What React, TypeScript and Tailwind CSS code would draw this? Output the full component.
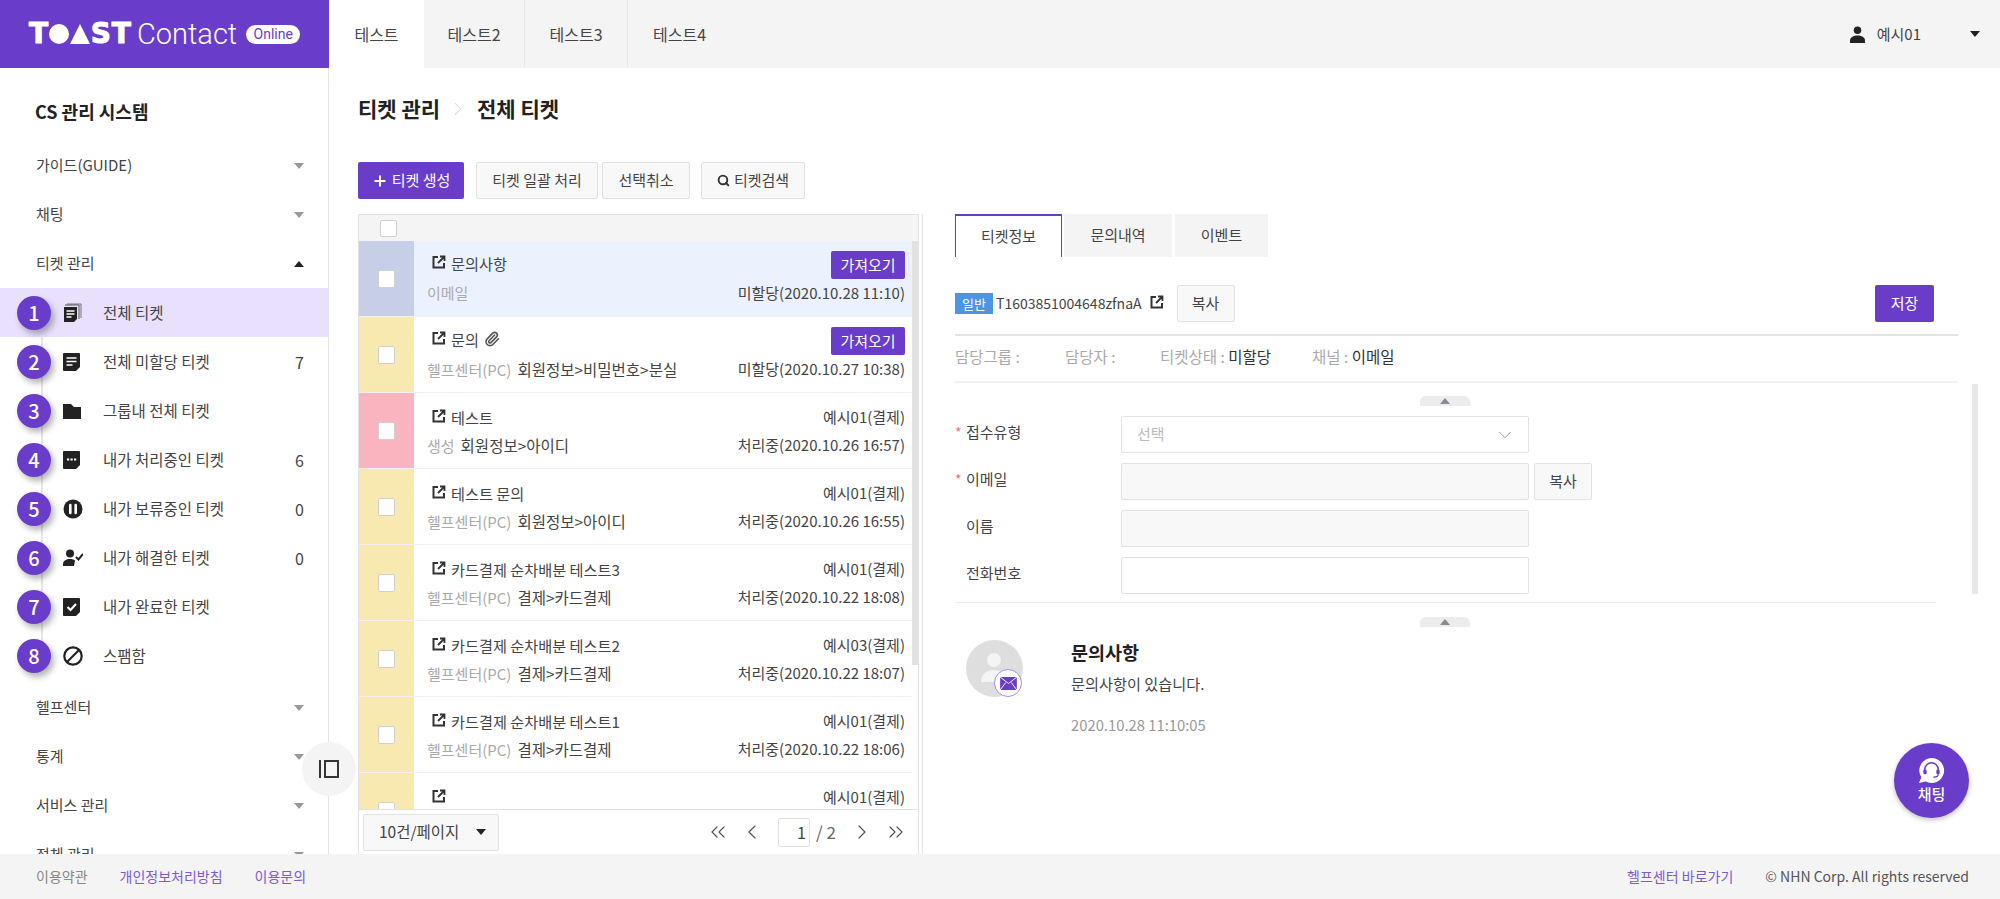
import { ChevronDown, ChevronLeft, ChevronRight, ChevronsLeft, ChevronsRight, Paperclip, Plus, Search } from 'lucide-react';

const sideTop = ['가이드(GUIDE)', '채팅'];
const sideBottom = ['헬프센터', '통계', '서비스 관리', '전체 관리'];

const subMenu = [
  { label: '전체 티켓', count: '', icon: 'docs', active: true },
  { label: '전체 미할당 티켓', count: '7', icon: 'doc' },
  { label: '그룹내 전체 티켓', count: '', icon: 'folder' },
  { label: '내가 처리중인 티켓', count: '6', icon: 'dots' },
  { label: '내가 보류중인 티켓', count: '0', icon: 'pause' },
  { label: '내가 해결한 티켓', count: '0', icon: 'user' },
  { label: '내가 완료한 티켓', count: '', icon: 'check' },
  { label: '스팸함', count: '', icon: 'ban' },
];

const tickets = [
  { color: 'bg-[#c7cfe8]', title: '문의사항', source: '이메일', path: '', owner: '', status: '미할당(2020.10.28 11:10)', take: true, selected: true },
  { color: 'bg-[#f8e9b0]', title: '문의', clip: true, source: '헬프센터(PC)', path: '회원정보>비밀번호>분실', owner: '', status: '미할당(2020.10.27 10:38)', take: true },
  { color: 'bg-[#f9b4c0]', title: '테스트', source: '생성', path: '회원정보>아이디', owner: '예시01(결제)', status: '처리중(2020.10.26 16:57)' },
  { color: 'bg-[#f8e9b0]', title: '테스트 문의', source: '헬프센터(PC)', path: '회원정보>아이디', owner: '예시01(결제)', status: '처리중(2020.10.26 16:55)' },
  { color: 'bg-[#f8e9b0]', title: '카드결제 순차배분 테스트3', source: '헬프센터(PC)', path: '결제>카드결제', owner: '예시01(결제)', status: '처리중(2020.10.22 18:08)' },
  { color: 'bg-[#f8e9b0]', title: '카드결제 순차배분 테스트2', source: '헬프센터(PC)', path: '결제>카드결제', owner: '예시03(결제)', status: '처리중(2020.10.22 18:07)' },
  { color: 'bg-[#f8e9b0]', title: '카드결제 순차배분 테스트1', source: '헬프센터(PC)', path: '결제>카드결제', owner: '예시01(결제)', status: '처리중(2020.10.22 18:06)' },
  { color: 'bg-[#f8e9b0]', title: '', source: '', path: '', owner: '예시01(결제)', status: '' },
];

const Caret = ({ up = false, className = '' }: { up?: boolean; className?: string }) => (
  <svg viewBox="0 0 12 8" className={`w-[12px] h-[8px] ${className}`}>
    <path d={up ? 'M6 1l5 6H1z' : 'M1 1h10L6 7z'} fill="currentColor" />
  </svg>
);

const ExternalIcon = ({ className = '' }: { className?: string }) => (
  <svg viewBox="0 0 14 14" className={`w-[14px] h-[14px] text-[#333] ${className}`} fill="none" stroke="currentColor">
    <path d="M6 2H1.5v10.5H12V8" strokeWidth="2" />
    <path d="M6 8l6-6M8 1.5h4.5V6" strokeWidth="1.8" />
  </svg>
);

const MenuIcon = ({ name }: { name: string }) => {
  const cut = 'M0 2a1 1 0 0 1 1-1h15a1 1 0 0 1 1 1v13l-4 4H1a1 1 0 0 1-1-1z';
  return (
    <svg viewBox="0 0 20 20" className="w-[20px] h-[20px] text-[#222]">
      {name === 'docs' && (
        <g>
          <path d="M4 1h14v14" fill="none" stroke="#777" strokeWidth="1" />
          <path d="M2 3h14v14" fill="none" stroke="#555" strokeWidth="1" transform="translate(0 -1)" />
          <path d="M1 4h13v12l-3 3H1z" fill="currentColor" />
          <path d="M3.5 8h8M3.5 11h8M3.5 14h5" stroke="#fff" strokeWidth="1.4" />
        </g>
      )}
      {name === 'doc' && (
        <g>
          <path d={cut} fill="currentColor" />
          <path d="M3.5 6h10M3.5 9.5h10M3.5 13h6" stroke="#fff" strokeWidth="1.5" />
        </g>
      )}
      {name === 'folder' && <path d="M0 3h8l3 3h7v12H0z" fill="currentColor" />}
      {name === 'dots' && (
        <g>
          <path d={cut} fill="currentColor" />
          <path d="M4 9.5h2.2M7.5 9.5h2.2M11 9.5h2.2" stroke="#fff" strokeWidth="2" />
        </g>
      )}
      {name === 'pause' && (
        <g>
          <circle cx="10" cy="10" r="9.5" fill="currentColor" />
          <path d="M7.3 6v8M12.7 6v8" stroke="#fff" strokeWidth="2.6" strokeLinecap="round" />
        </g>
      )}
      {name === 'user' && (
        <g>
          <circle cx="7" cy="5.5" r="4" fill="currentColor" />
          <path d="M0 18v-2c0-3 3-5 7-5 2 0 4 .5 5 1.5l-1 5.5z" fill="currentColor" />
          <path d="M13 9l2.5 2.5L20 6" fill="none" stroke="currentColor" strokeWidth="2" />
        </g>
      )}
      {name === 'check' && (
        <g>
          <path d={cut} fill="currentColor" />
          <path d="M4.5 10l3 3 5.5-6" fill="none" stroke="#fff" strokeWidth="2.2" />
        </g>
      )}
      {name === 'ban' && (
        <g fill="none" stroke="currentColor" strokeWidth="2.2">
          <circle cx="10" cy="10" r="8.7" />
          <path d="M4 16L16 4" />
        </g>
      )}
    </svg>
  );
};

const Collapser = () => (
  <div className="ml-[465px] w-[50px] h-[10px] rounded-t-[6px] bg-[#ececec] flex items-center justify-center">
    <Caret up className="w-[8px] h-[6px] text-[#8a8a96]" />
  </div>
);

const GrayButton = ({ children, className = '' }: { children: React.ReactNode; className?: string }) => (
  <button className={`h-[37px] rounded-[2px] border border-[#e2e2e2] bg-[#f8f8f8] text-[15px] text-[#444] ${className}`}>{children}</button>
);

const FormRow = ({ label, star = false, children }: { label: string; star?: boolean; children: React.ReactNode }) => (
  <div className="flex items-center h-[37px]">
    <div className="w-[166px] flex items-center text-[15px] text-[#444] -mt-[5px]">
      <span className="w-[11px] text-[#f26d7d] text-[14px]">{star ? '*' : ''}</span>
      {label}
    </div>
    {children}
  </div>
);

export default function App() {
  return (
    <div className="w-[2000px] h-[899px] flex flex-col overflow-hidden bg-white text-[#444] [font-family:'Noto_Sans_CJK_KR','Noto_Sans',sans-serif]">
      {/* Header */}
      <header className="h-[68px] flex shrink-0 bg-[#f4f4f4]">
        <div className="w-[329px] bg-[#693dc9] flex items-center pl-[29px] text-white">
          <div className="flex items-center w-[102px] h-[20px] justify-between [font-family:'DejaVu_Sans',sans-serif] font-bold text-[28px] leading-[20px] [-webkit-text-stroke:1px_white]">
            <span>T</span>
            <span className="w-[20px] h-[20px] rounded-full bg-white" />
            <svg viewBox="0 0 20 20" className="w-[20px] h-[20px]"><path d="M10 0l10 20H0z" fill="#fff" /></svg>
            <span>S</span>
            <span>T</span>
          </div>
          <span className="ml-[6px] [font-family:'Roboto',sans-serif] font-light text-[29px] leading-none">Contact</span>
          <span className="ml-[9px] w-[54px] h-[19px] rounded-full bg-white text-[#693dc9] text-[14px] leading-[19px] text-center [font-family:'Roboto',sans-serif]">Online</span>
        </div>
        <nav className="flex text-[16px] text-[#444]">
          <div className="w-[95px] bg-white flex items-center justify-center">테스트</div>
          <div className="w-[101px] flex items-center justify-center border-r border-[#e6e6e6]">테스트2</div>
          <div className="w-[103px] flex items-center justify-center border-r border-[#e6e6e6]">테스트3</div>
          <div className="w-[103px] flex items-center justify-center">테스트4</div>
        </nav>
        <div className="ml-auto flex items-center pr-[19px] text-[15px]">
          <svg viewBox="0 0 16 18" className="w-[15px] h-[17px] text-[#222]">
            <circle cx="8" cy="4.5" r="4" fill="currentColor" />
            <path d="M0 18v-3c0-3 4-5 8-5s8 2 8 5v3z" fill="currentColor" />
          </svg>
          <span className="ml-[12px]">예시01</span>
          <Caret className="ml-[48px] text-[#222]" />
        </div>
      </header>

      <div className="flex-1 flex min-h-0">
        {/* Sidebar */}
        <aside className="relative w-[329px] shrink-0 border-r border-[#e4e4e4]">
          <div className="h-full overflow-hidden">
            <h2 className="pl-[35px] pt-[29px] h-[73px] text-[18px] font-bold text-[#222] leading-[28px]">CS 관리 시스템</h2>
            {sideTop.map((label) => (
              <div key={label} className="h-[49px] pl-[36px] pr-[23px] flex items-center justify-between text-[15px]">
                {label}
                <Caret className="text-[#999]" />
              </div>
            ))}
            <div className="h-[49px] pl-[36px] pr-[23px] flex items-center justify-between text-[15px]">
              티켓 관리
              <Caret up className="text-[#222]" />
            </div>
            <div className="relative">
              <div className="absolute left-[41px] top-[49px] bottom-[20px] w-[2px] bg-[#e6e6e6]" />
              {subMenu.map((item, i) => (
                <div key={item.label} className={`relative h-[49px] flex items-center text-[15.5px] ${item.active ? 'bg-[#e9e0fd]' : ''}`}>
                  <span className="absolute left-[17px] w-[34px] h-[34px] rounded-full bg-[#693dc9] text-white text-[20px] font-medium flex items-center justify-center shadow-[3px_4px_6px_rgba(0,0,0,0.3)]">
                    {i + 1}
                  </span>
                  <span className="ml-[63px]"><MenuIcon name={item.icon} /></span>
                  <span className="ml-[20px]">{item.label}</span>
                  <span className="absolute left-[295px] text-[16px]">{item.count}</span>
                </div>
              ))}
            </div>
            <div className="mt-[3px]">
              {sideBottom.map((label) => (
                <div key={label} className="h-[49px] pl-[36px] pr-[23px] flex items-center justify-between text-[15px]">
                  {label}
                  <Caret className="text-[#999]" />
                </div>
              ))}
            </div>
          </div>
          <button className="absolute left-[302px] top-[674px] w-[54px] h-[54px] rounded-full bg-[#f4f4f4] flex items-center justify-center">
            <svg viewBox="0 0 20 18" className="w-[20px] h-[18px]" fill="none" stroke="#333" strokeWidth="2">
              <path d="M1 0v18" />
              <rect x="6" y="1" width="13" height="16" />
            </svg>
          </button>
        </aside>

        {/* Main */}
        <main className="flex-1 min-w-0 flex flex-col pl-[29px]">
          <div className="pt-[27px] h-[55px] flex items-center text-[21px] font-bold text-[#222]">
            <span>티켓 관리</span>
            <ChevronRight strokeWidth={1} className="w-[22px] h-[22px] ml-[7px] text-[#c8c8c8]" />
            <span className="ml-[8px]">전체 티켓</span>
          </div>
          <div className="mt-[39px] flex items-center text-[15px]">
            <button className="w-[106px] h-[37px] rounded-[2px] bg-[#693dc9] text-white flex items-center justify-center gap-[4px]">
              <Plus strokeWidth={3} className="w-[16px] h-[16px]" />
              티켓 생성
            </button>
            <GrayButton className="ml-[12px] w-[122px]">티켓 일괄 처리</GrayButton>
            <GrayButton className="ml-[4px] w-[88px]">선택취소</GrayButton>
            <GrayButton className="ml-[11px] w-[104px] flex items-center justify-center gap-[4px]">
              <Search strokeWidth={3.5} className="w-[13px] h-[13px] text-[#333]" />
              티켓검색
            </GrayButton>
          </div>

          <div className="mt-[15px] flex-1 min-h-0 flex">
            {/* Ticket list */}
            <section className="w-[561px] shrink-0 flex flex-col border-x border-t border-[#e2e2e2]">
              <div className="h-[26px] shrink-0 bg-[#f4f4f4] pl-[21px] pt-[5px]">
                <div className="w-[17px] h-[17px] bg-white border border-[#cfcfcf] rounded-[2px]" />
              </div>
              <div className="relative flex-1 min-h-0 overflow-hidden">
                <div className="absolute right-0 top-0 w-[6px] h-[424px] bg-[#e2e2e2] z-10" />
                {tickets.map((t, i) => (
                  <div key={i} className={`h-[76px] flex border-b border-[#f2f2f2] mr-[6px] ${t.selected ? 'bg-[#ebf2fe]' : ''}`}>
                    <div className={`w-[55px] shrink-0 flex items-center justify-center pr-[1px] ${t.color}`}>
                      <div className="w-[17px] h-[18px] bg-white border border-[#d0d0d0] rounded-[2px]" />
                    </div>
                    <div className="flex-1 min-w-0 pl-[13px] pr-[7px] pt-[14px] text-[15px] leading-[20px]">
                      <div className="h-[20px] flex items-center justify-between">
                        <div className={`pl-[5px] flex items-center gap-[5px] ${t.take ? '-mt-[4px]' : ''}`}>
                          <ExternalIcon className="-mt-[2px]" />
                          <span className="text-[15.2px]">{t.title}</span>
                          {t.clip && <Paperclip strokeWidth={2.4} className="w-[16px] h-[16px] text-[#555]" />}
                        </div>
                        {t.take ? (
                          <button className="w-[74px] h-[28px] rounded-[2px] bg-[#693dc9] text-white text-[15px]">가져오기</button>
                        ) : (
                          <span>{t.owner}</span>
                        )}
                      </div>
                      <div className="mt-[8px] h-[20px] flex justify-between">
                        <div>
                          <span className="text-[#aaa]">{t.source}</span>
                          {t.path && <span className="ml-[6px] text-[15.5px]">{t.path}</span>}
                        </div>
                        <span>{t.status}</span>
                      </div>
                    </div>
                  </div>
                ))}
              </div>
              <div className="h-[45px] shrink-0 border-t border-[#e2e2e2] bg-white flex items-center pl-[4px] pr-[10px] text-[15.5px]">
                <div className="w-[136px] h-[37px] rounded-[2px] border border-[#e2e2e2] bg-[#f8f8f8] flex items-center pl-[15px]">
                  10건/페이지
                  <Caret className="ml-[16px] w-[9px] h-[6px] text-[#222]" />
                </div>
                <ChevronsLeft strokeWidth={1.2} className="ml-auto w-[24px] h-[24px] text-[#555]" />
                <ChevronLeft strokeWidth={1.2} className="ml-[10px] w-[24px] h-[24px] text-[#555]" />
                <div className="ml-[14px] w-[32px] h-[29px] rounded-[2px] border border-[#e2e2e2] text-right pr-[3px] text-[16px] leading-[27px]">1</div>
                <span className="ml-[6px] w-[25px] text-[#666] text-[17px]">/ 2</span>
                <ChevronRight strokeWidth={1.2} className="ml-[9px] w-[24px] h-[24px] text-[#555]" />
                <ChevronsRight strokeWidth={1.2} className="ml-[10px] w-[24px] h-[24px] text-[#555]" />
              </div>
            </section>

            {/* Ticket detail */}
            <section className="relative ml-[3px] flex-1 min-w-0 border-l border-[#e2e2e2] pl-[32px]">
              <div className="absolute right-[22px] top-[170px] w-[6px] h-[210px] bg-[#e8e8e8]" />
              <div className="flex items-end h-[43px] text-[15px]">
                <div className="w-[107px] h-[43px] border-x border-t-2 border-[#693dc9] bg-white flex items-center justify-center">티켓정보</div>
                <div className="ml-[2px] w-[108px] h-[43px] bg-[#f4f4f4] flex items-center justify-center">문의내역</div>
                <div className="ml-[3px] w-[93px] h-[43px] bg-[#f4f4f4] flex items-center justify-center">이벤트</div>
              </div>
              <div className="mt-[28px] w-[979px] h-[37px] flex items-center text-[14px]">
                <span className="w-[38px] h-[21px] bg-[#4a96e6] text-white text-[13px] leading-[21px] text-center">일반</span>
                <span className="ml-[3px]">T1603851004648zfnaA</span>
                <ExternalIcon className="ml-[8px] -mt-[3px]" />
                <GrayButton className="ml-[13px] w-[58px]">복사</GrayButton>
                <button className="ml-auto w-[59px] h-[37px] rounded-[2px] bg-[#693dc9] text-white text-[15px]">저장</button>
              </div>
              <div className="mt-[12px] w-[1003px] border-y-2 border-t-[#e4e4e4] border-b-[#f0f0f0] h-[49px] pb-[3px] flex items-center text-[15.5px] text-[#aaa]">
                <span className="w-[110px]">담당그룹 :</span>
                <span className="w-[95px]">담당자 :</span>
                <span className="w-[152px]">티켓상태 : <span className="text-[#333]">미할당</span></span>
                <span>채널 : <span className="text-[#333]">이메일</span></span>
              </div>
              <div className="mt-[13px]"><Collapser /></div>
              <div className="mt-[10px] flex flex-col gap-[10px] w-[640px]">
                <FormRow label="접수유형" star>
                  <div className="w-[408px] h-[37px] rounded-[2px] border border-[#e2e2e2] bg-white flex items-center justify-between pl-[15px] pr-[12px] text-[15px] text-[#bbb]">
                    선택
                    <ChevronDown strokeWidth={1} className="w-[22px] h-[22px] text-[#999]" />
                  </div>
                </FormRow>
                <FormRow label="이메일" star>
                  <div className="w-[408px] h-[37px] rounded-[2px] border border-[#e2e2e2] bg-[#f8f8f8]" />
                  <GrayButton className="ml-[5px] w-[58px]">복사</GrayButton>
                </FormRow>
                <FormRow label="이름">
                  <div className="w-[408px] h-[37px] rounded-[2px] border border-[#e2e2e2] bg-[#f8f8f8]" />
                </FormRow>
                <FormRow label="전화번호">
                  <div className="w-[408px] h-[37px] rounded-[2px] border border-[#e2e2e2] bg-white" />
                </FormRow>
              </div>
              <div className="mt-[8px] w-[981px] border-t border-[#ececec]" />
              <div className="mt-[14px]"><Collapser /></div>
              <div className="mt-[13px] flex pl-[11px]">
                <div className="relative w-[57px] h-[57px] rounded-full bg-[#dedede]">
                  <svg viewBox="0 0 57 57" className="w-[57px] h-[57px]">
                    <circle cx="28" cy="20" r="7" fill="#f4f4f4" />
                    <path d="M15 42c0-8 6-12 13-12s13 4 13 12z" fill="#f4f4f4" />
                  </svg>
                  <span className="absolute left-[28px] top-[29px] w-[28px] h-[28px] rounded-full bg-white border border-[#a88de6] flex items-center justify-center">
                    <svg viewBox="0 0 18 14" className="w-[17px] h-[13px]">
                      <rect width="18" height="14" rx="1" fill="#693dc9" />
                      <path d="M0 0l9 7 9-7M0 14l6-8M18 14l-6-8" fill="none" stroke="#fff" strokeWidth="1" />
                    </svg>
                  </span>
                </div>
                <div className="ml-[48px] -mt-[1px]">
                  <div className="text-[18.5px] font-bold text-[#222] leading-[26px]">문의사항</div>
                  <div className="mt-[5px] text-[15.2px] leading-[26px]">문의사항이 있습니다.</div>
                  <div className="mt-[16px] text-[14.8px] text-[#999] leading-[26px]">2020.10.28 11:10:05</div>
                </div>
              </div>
              <button className="absolute left-[971px] top-[529px] w-[75px] h-[75px] rounded-full bg-[#693dc9] text-white text-[15px] font-medium flex flex-col items-center justify-center shadow-[0_2px_5px_rgba(0,0,0,0.25)]">
                <svg viewBox="0 0 28 28" className="w-[27px] h-[27px]">
                  <path d="M14 1a13 13 0 1 1-6 24.5L1 27l2.5-6A13 13 0 0 1 14 1z" fill="#fff" />
                  <path d="M7 15v-2a7 7 0 0 1 14 0v2" fill="none" stroke="#693dc9" strokeWidth="1.6" />
                  <rect x="5.5" y="13" width="3.5" height="5" rx="1.5" fill="#693dc9" />
                  <rect x="19" y="13" width="3.5" height="5" rx="1.5" fill="#693dc9" />
                  <path d="M21 18c0 2-2 3-5 3" fill="none" stroke="#693dc9" strokeWidth="1.3" />
                </svg>
                <span className="leading-[20px]">채팅</span>
              </button>
            </section>
          </div>
        </main>
      </div>

      {/* Footer */}
      <footer className="h-[45px] shrink-0 bg-[#f4f4f4] flex items-center pl-[36px] pr-[31px] text-[14px] z-10">
        <span className="text-[#888]">이용약관</span>
        <span className="ml-[32px] text-[#7a5bd6]">개인정보처리방침</span>
        <span className="ml-[32px] text-[#7a5bd6]">이용문의</span>
        <span className="ml-auto text-[#7a5bd6]">헬프센터 바로가기</span>
        <span className="ml-[32px] text-[#555]">© NHN Corp. All rights reserved</span>
      </footer>
    </div>
  );
}
